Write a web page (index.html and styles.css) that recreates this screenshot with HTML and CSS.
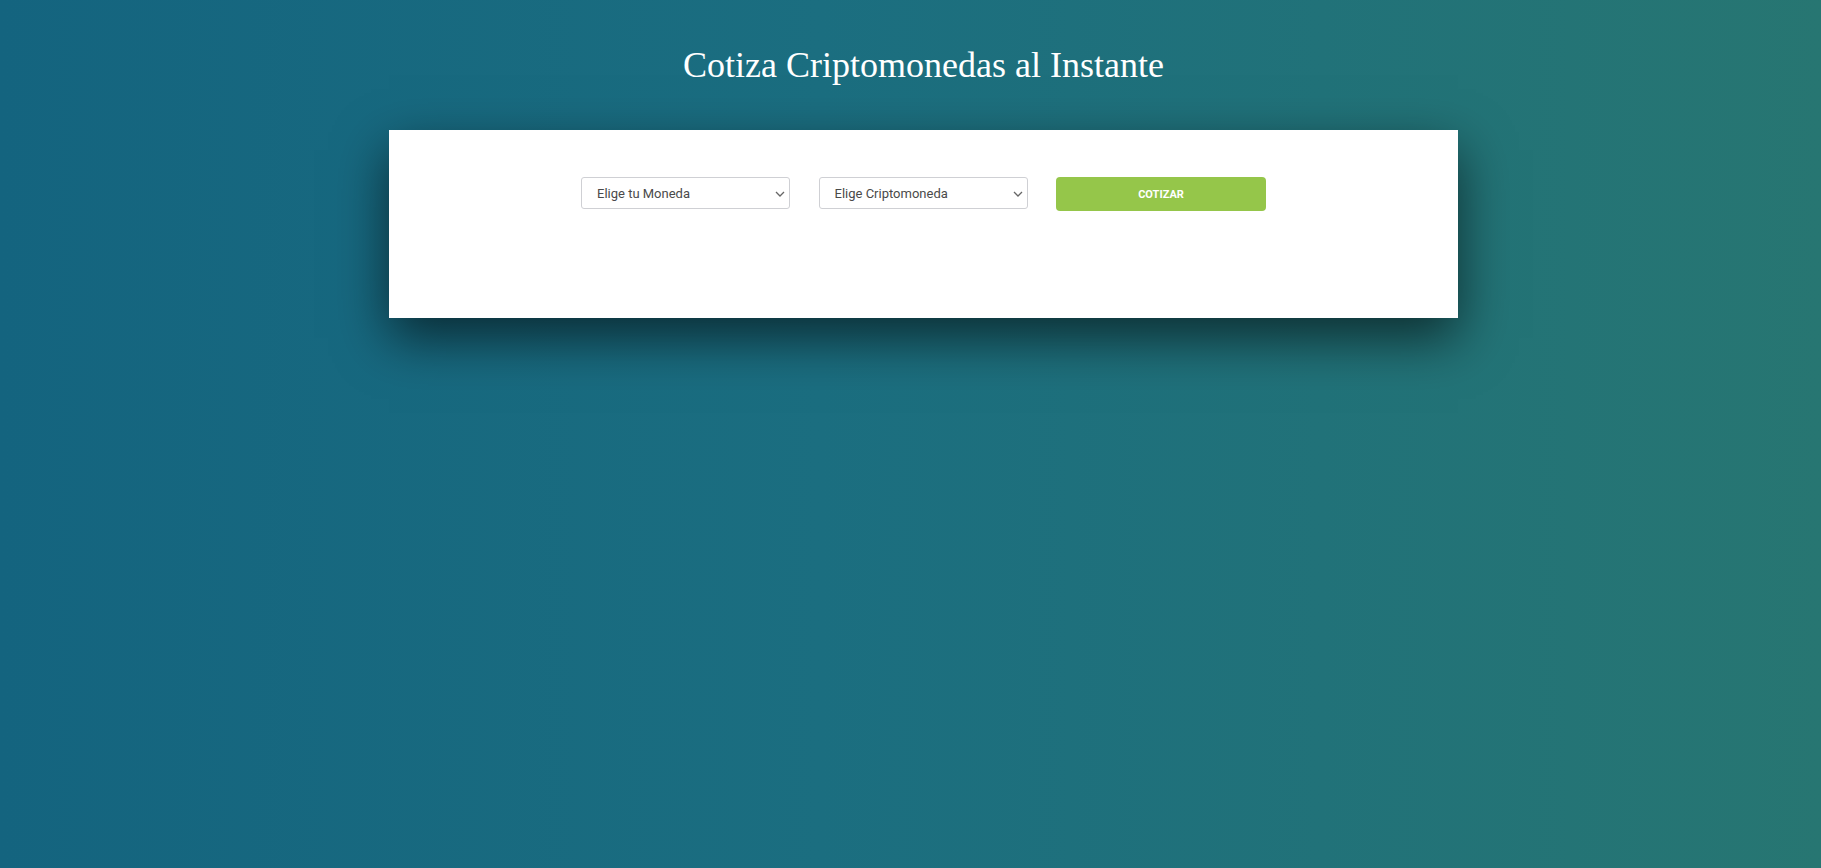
FILE: index.html
```html
<!DOCTYPE html>
<html lang="es">
<head>
<meta charset="utf-8">
<title>Cotiza Criptomonedas</title>
<link rel="stylesheet" href="styles.css">
</head>
<body>
  <main class="page">
    <h1 class="title">Cotiza Criptomonedas al Instante</h1>
    <section class="card">
      <form class="form">
        <div class="select-wrap">
          <select class="field">
            <option>Elige tu Moneda</option>
          </select>
          <svg class="chev" width="10" height="6" viewBox="0 0 10 6"><path d="M1 1l4 4 4-4" fill="none" stroke="#666" stroke-width="1.3"/></svg>
        </div>
        <div class="select-wrap">
          <select class="field">
            <option>Elige Criptomoneda</option>
          </select>
          <svg class="chev" width="10" height="6" viewBox="0 0 10 6"><path d="M1 1l4 4 4-4" fill="none" stroke="#666" stroke-width="1.3"/></svg>
        </div>
        <button type="button" class="btn">Cotizar</button>
      </form>
    </section>
  </main>
</body>
</html>
```

FILE: styles.css
```css
html, body {
  margin: 0;
  padding: 0;
}
body {
  min-height: 100vh;
  background: linear-gradient(to right, #14647f 0%, #1b6e80 45%, #277672 100%);
  font-family: Roboto, "Liberation Sans", sans-serif;
}
.page {
  display: flex;
  flex-direction: column;
  align-items: center;
  padding-top: 45px;
}
.title {
  margin: 0;
  font-family: "Liberation Serif", "DejaVu Serif", serif;
  font-weight: 400;
  font-size: 36px;
  line-height: 40px;
  color: #ffffff;
  margin-left: 26px;
}
.card {
  margin-top: 45px;
  margin-left: 26px;
  width: 1069px;
  height: 188px;
  box-sizing: border-box;
  background: #ffffff;
  padding-top: 47px;
  box-shadow: 0 20px 50px rgba(0, 0, 0, 0.6);
}
.form {
  display: flex;
  justify-content: center;
  gap: 28.5px;
}
.select-wrap {
  position: relative;
  width: 209px;
  height: 32px;
}
.field {
  appearance: none;
  -webkit-appearance: none;
  width: 100%;
  height: 32px;
  box-sizing: border-box;
  border: 1px solid #cfd0d4;
  border-radius: 3px;
  background: #ffffff;
  color: #4a4a4a;
  font-family: Roboto, "Liberation Sans", sans-serif;
  font-size: 13px;
  padding: 0 24px 0 15px;
  margin: 0;
}
.chev {
  position: absolute;
  right: 5px;
  top: 14px;
  pointer-events: none;
}
.btn {
  width: 210px;
  height: 34px;
  border: none;
  border-radius: 4px;
  background: #95c64a;
  color: #ffffff;
  font-family: Roboto, "Liberation Sans", sans-serif;
  font-weight: 700;
  font-size: 11px;
  text-transform: uppercase;
}
```
